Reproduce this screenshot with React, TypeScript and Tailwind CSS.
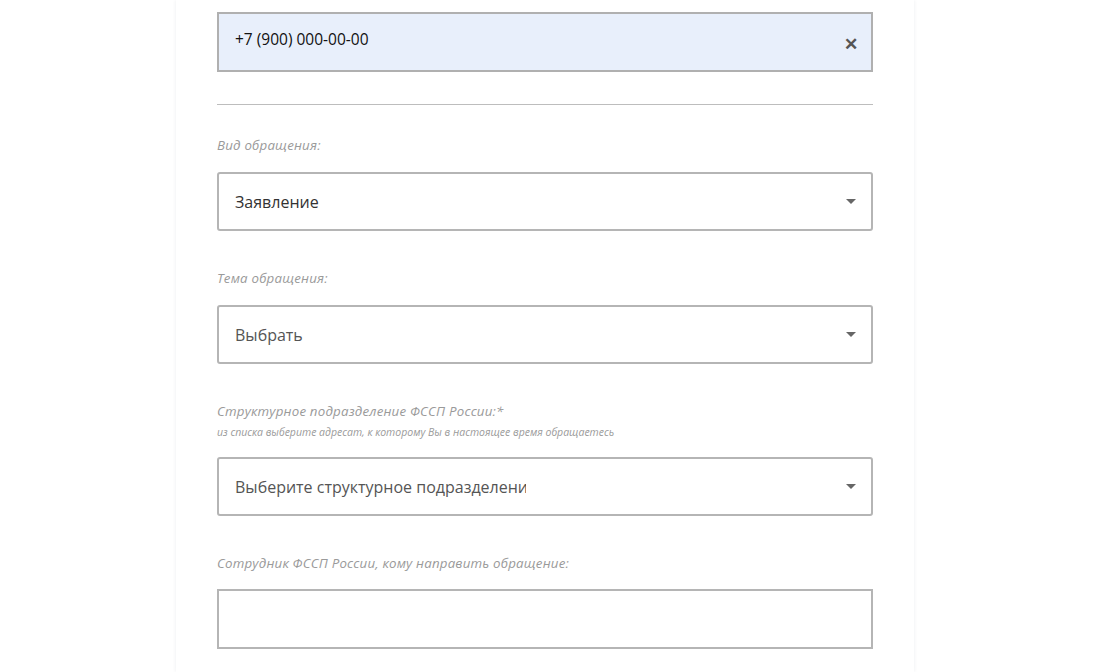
import { useState } from 'react'

function Caret(){
  return (
    <svg width="10" height="6" viewBox="0 0 10 6" className="shrink-0">
      <path d="M0 0h10L5 5z" fill="#666" />
    </svg>
  )
}

function Label({ children }: { children: React.ReactNode }){
  return <div className="italic text-[13.3px] leading-[16px] text-[#9a9a9a] tracking-[0.2px]">{children}</div>
}

function Select({ value, dark }: { value: string; dark?: boolean }){
  return (
    <div className="h-[59px] border-2 border-[#b5b5b5] rounded-[3px] bg-white flex items-center pl-[16px] pr-[15px]">
      <div className={'flex-1 text-[16px] ' + (dark ? 'text-[#333]' : 'text-[#555]')}>
        <span className="inline-block max-w-[291px] overflow-hidden whitespace-nowrap align-bottom">{value}</span>
      </div>
      <Caret />
    </div>
  )
}

export default function App(){
  const [phone] = useState('+7 (900) 000-00-00')
  return (
    <div className="min-h-[672px] bg-white" style={{ fontFamily: '"Open Sans", "Noto Sans", sans-serif' }}>
      <div className="ml-[176px] w-[738px] min-h-[672px] bg-white shadow-[0_0_4px_rgba(0,40,60,0.08)] px-[41px] pt-[12px]">
        <div className="h-[60px] border-2 border-[#b0b0b0] bg-[#e8effb] flex items-center pl-[16px] pr-[13px] pb-[5px]">
          <div className="flex-1 text-[15.5px] text-[#111]">{phone}</div>
          <span className="text-[#555] text-[17px] font-bold leading-none mt-[8px]">✕</span>
        </div>
        <div className="mt-[32px] h-px bg-[#bdbdbd]" />

        <div className="mt-[32px]"><Label>Вид обращения:</Label></div>
        <div className="mt-[19px]"><Select value="Заявление" dark /></div>

        <div className="mt-[39px]"><Label>Тема обращения:</Label></div>
        <div className="mt-[19px]"><Select value="Выбрать" /></div>

        <div className="mt-[39px]"><Label>Структурное подразделение ФССП России:*</Label></div>
        <div className="mt-[7px] italic text-[10.5px] leading-[12px] text-[#9a9a9a]">из списка выберите адресат, к которому Вы в настоящее время обращаетесь</div>
        <div className="mt-[19px]"><Select value="Выберите структурное подразделение" /></div>

        <div className="mt-[39px]"><Label>Сотрудник ФССП России, кому направить обращение:</Label></div>
        <div className="mt-[18px] h-[60px] border-2 border-[#b5b5b5] bg-white" />
      </div>
    </div>
  )
}
